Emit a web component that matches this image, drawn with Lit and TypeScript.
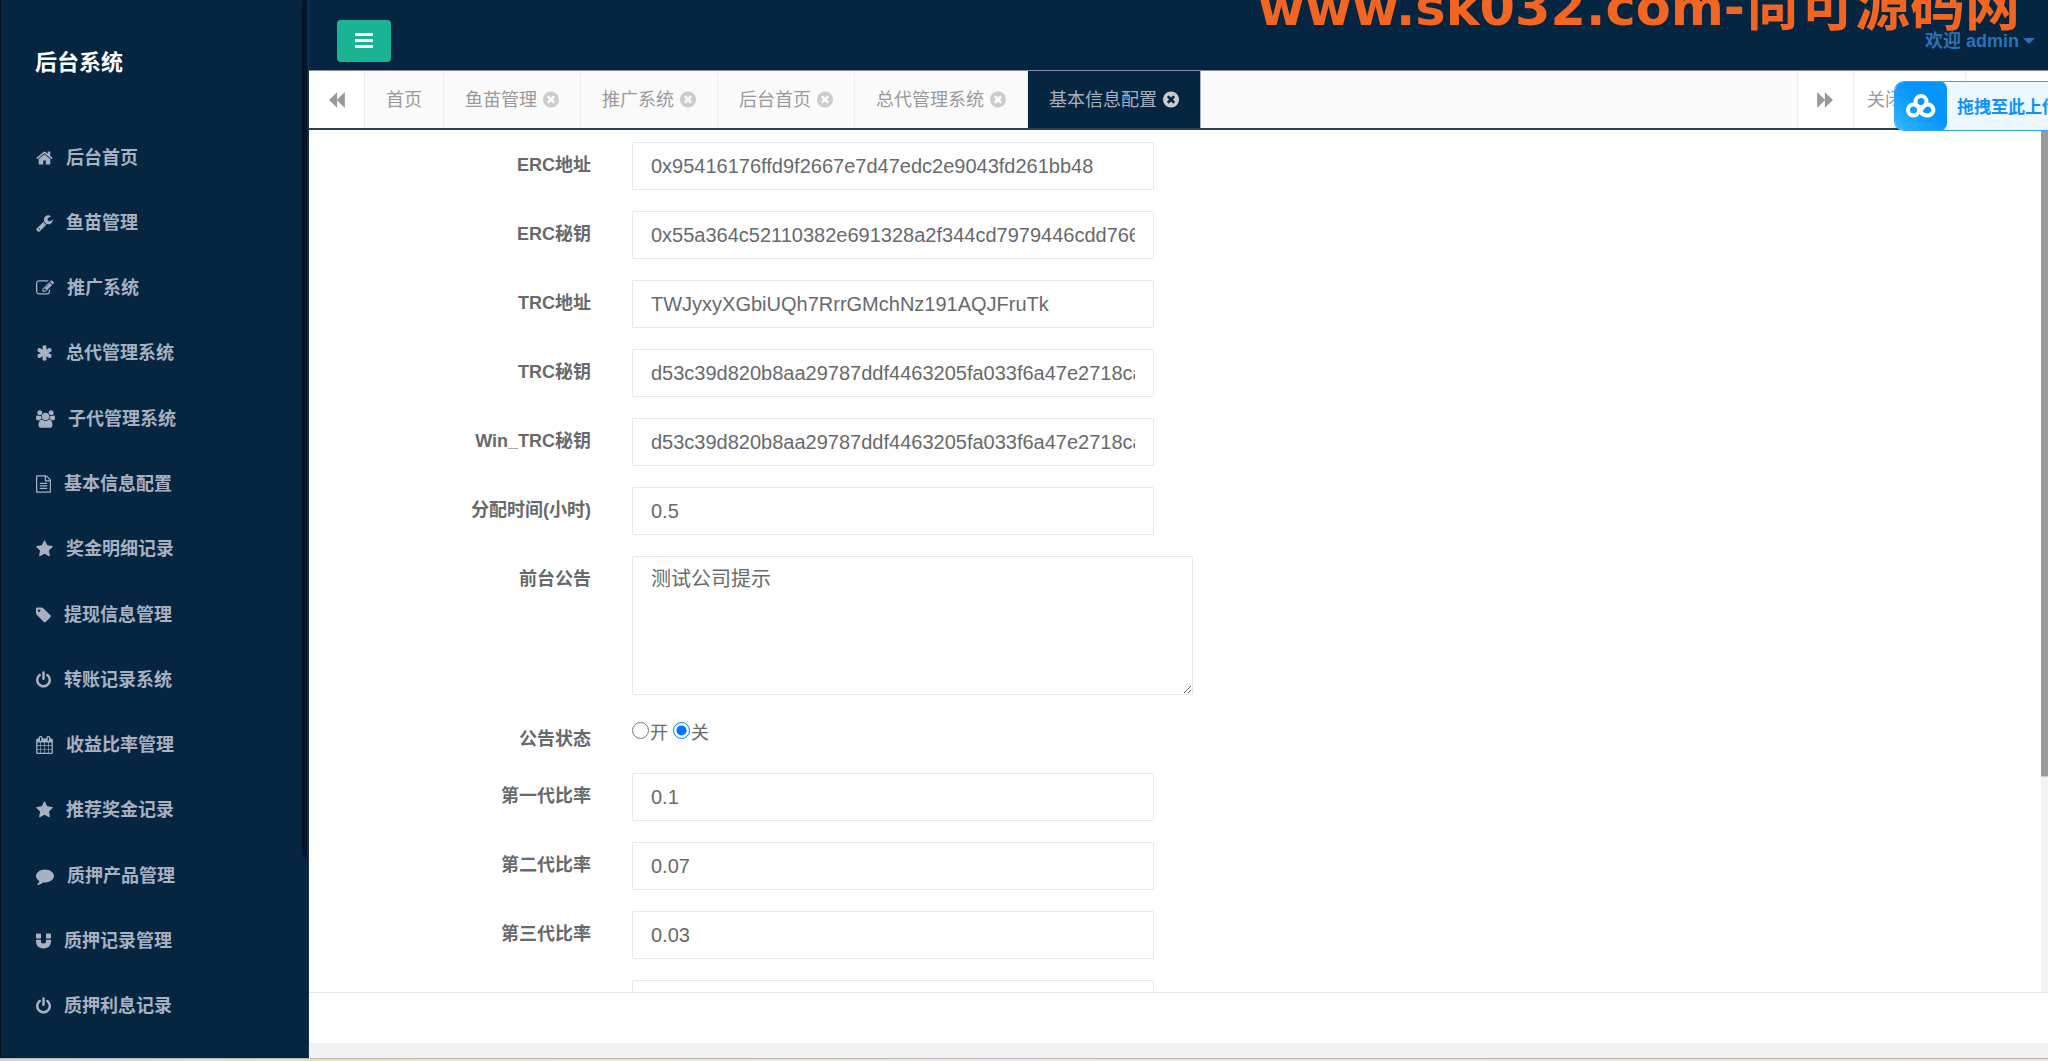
import { LitElement, html, css, svg } from "lit";
import { customElement, property } from "lit/decorators.js";
import { classMap } from "lit/directives/class-map.js";

interface Glyph {
  x: number;
  w: number;
  d: string;
}

// Icon outlines on a 1792-unit em square; x and w give the glyph's own advance box.
const GLYPHS: Record<string, Glyph> = {
  home: { x: 64, w: 1664, d: "M1472 992v480q0 26-19 45t-45 19h-384v-384h-256v384h-384q-26 0-45-19t-19-45v-480q0-1 .5-3t.5-3l575-474 575 474q1 2 1 6zm223-69l-62 74q-8 9-21 11h-3q-13 0-21-7l-692-577-692 577q-12 8-24 7-13-2-21-11l-62-74q-8-10-7-23.5t11-21.5l719-599q32-26 76-26t76 26l244 204v-195q0-14 9-23t23-9h192q14 0 23 9t9 23v408l219 182q10 8 11 21.5t-7 23.5z" },
  wrench: { x: 64, w: 1664, d: "M448 1472q0-26-19-45t-45-19-45 19-19 45 19 45 45 19 45-19 19-45zm644-420l-682 682q-37 37-90 37-52 0-91-37l-106-108q-38-36-38-90 0-53 38-91l681-681q39 98 114.5 173.5t173.5 114.5zm634-435q0 39-23 106-47 134-164.5 217.5t-258.5 83.5q-185 0-316.5-131.5t-131.5-316.5 131.5-316.5 316.5-131.5q58 0 121.5 16.5t107.5 46.5q16 11 16 28t-16 28l-293 169v224l193 107q5-3 79-48.5t135.5-81 70.5-35.5q15 0 23.5 10t8.5 25z" },
  edit: { x: 0, w: 1792, d: "M888 1184l116-116-152-152-116 116v56h96v96h56zm440-720q-16-16-33 1l-350 350q-17 17-1 33t33-1l350-350q17-17 1-33zm80 594v190q0 119-84.5 203.5t-203.5 84.5h-832q-119 0-203.5-84.5t-84.5-203.5v-832q0-119 84.5-203.5t203.5-84.5h832q63 0 117 25 15 7 18 23 3 17-9 29l-49 49q-14 14-32 8-23-6-45-6h-832q-66 0-113 47t-47 113v832q0 66 47 113t113 47h832q66 0 113-47t47-113v-126q0-13 9-22l64-64q15-15 35-7t20 29zm-96-738l288 288-672 672h-288v-288zm444 132l-92 92-288-288 92-92q28-28 68-28t68 28l152 152q28 28 28 68t-28 68z" },
  asterisk: { x: 64, w: 1664, d: "M1546 1050q46 26 59.5 77.5t-12.5 97.5l-64 110q-26 46-77.5 59.5t-97.5-12.5l-266-153v307q0 52-38 90t-90 38h-128q-52 0-90-38t-38-90v-307l-266 153q-46 26-97.5 12.5t-77.5-59.5l-64-110q-26-46-12.5-97.5t59.5-77.5l266-154-266-154q-46-26-59.5-77.5t12.5-97.5l64-110q26-46 77.5-59.5t97.5 12.5l266 153v-307q0-52 38-90t90-38h128q52 0 90 38t38 90v307l266-153q46-26 97.5-12.5t77.5 59.5l64 110q26 46 12.5 97.5t-59.5 77.5l-266 154z" },
  users: { x: -64, w: 1920, d: "M529 896q-162 5-265 128h-134q-82 0-138-40.5t-56-118.5q0-353 124-353 6 0 43.5 21t97.5 42.5 119 21.5q67 0 133-23-5 37-5 66 0 159 81 256zm1071 637q0 120-73 189.5t-194 69.5h-874q-121 0-194-69.5t-73-189.5q0-53 3.5-103.5t14-109 26.5-108.5 43-97.5 62-81 85.5-53.5 111.5-20q10 0 43 21.5t73 48 107 48 135 21.5 135-21.5 107-48 73-48 43-21.5q61 0 111.5 20t85.5 53.5 62 81 43 97.5 26.5 108.5 14 109 3.5 103.5zm-1024-1277q0 106-75 181t-181 75-181-75-75-181 75-181 181-75 181 75 75 181zm704 384q0 159-112.5 271.5t-271.5 112.5-271.5-112.5-112.5-271.5 112.5-271.5 271.5-112.5 271.5 112.5 112.5 271.5zm576 225q0 78-56 118.5t-138 40.5h-134q-103-123-265-128 81-97 81-256 0-29-5-66 66 23 133 23 59 0 119-21.5t97.5-42.5 43.5-21q124 0 124 353zm-128-609q0 106-75 181t-181 75-181-75-75-181 75-181 181-75 181 75 75 181z" },
  file: { x: 128, w: 1536, d: "M1596 380q28 28 48 76t20 88v1152q0 40-28 68t-68 28h-1344q-40 0-68-28t-28-68v-1600q0-40 28-68t68-28h896q40 0 88 20t76 48zm-444-244v376h376q-10-29-22-41l-313-313q-12-12-41-22zm384 1528v-1024h-416q-40 0-68-28t-28-68v-416h-768v1536h1280zm-1024-864q0-14 9-23t23-9h704q14 0 23 9t9 23v64q0 14-9 23t-23 9h-704q-14 0-23-9t-9-23v-64zm736 224q14 0 23 9t9 23v64q0 14-9 23t-23 9h-704q-14 0-23-9t-9-23v-64q0-14 9-23t23-9h704zm0 256q14 0 23 9t9 23v64q0 14-9 23t-23 9h-704q-14 0-23-9t-9-23v-64q0-14 9-23t23-9h704z" },
  star: { x: 64, w: 1664, d: "M1728 647q0 22-26 48l-363 354 86 500q1 7 1 20 0 21-10.5 35.5t-30.5 14.5q-19 0-40-12l-449-236-449 236q-22 12-40 12-21 0-31.5-14.5t-10.5-35.5q0-6 2-20l86-500-364-354q-25-27-25-48 0-37 56-46l502-73 225-455q19-41 49-41t49 41l225 455 502 73q56 9 56 46z" },
  tag: { x: 128, w: 1536, d: "M576 448q0-53-37.5-90.5t-90.5-37.5-90.5 37.5-37.5 90.5 37.5 90.5 90.5 37.5 90.5-37.5 37.5-90.5zm1067 576q0 53-37 90l-491 492q-39 37-91 37-53 0-90-37l-715-716q-38-37-64.5-101t-26.5-117v-416q0-52 38-90t90-38h416q53 0 117 26.5t102 64.5l715 714q37 39 37 91z" },
  power: { x: 128, w: 1536, d: "M1664 896q0 156-61 298t-164 245-245 164-298 61-298-61-245-164-164-245-61-298q0-182 80.5-343t226.5-270q43-32 95.5-25t83.5 50q32 42 24.5 94.5t-49.5 84.5q-98 74-151.5 181t-53.5 228q0 104 40.5 198.5t109.5 163.5 163.5 109.5 198.5 40.5 198.5-40.5 163.5-109.5 109.5-163.5 40.5-198.5q0-121-53.5-228t-151.5-181q-42-32-49.5-84.5t24.5-94.5q31-43 84-50t95 25q146 109 226.5 270t80.5 343zm-640-768v640q0 52-38 90t-90 38-90-38-38-90v-640q0-52 38-90t90-38 90 38 38 90z" },
  calendar: { x: 64, w: 1664, d: "M192 1664h288v-288h-288v288zm352 0h320v-288h-320v288zm-352-352h288v-320h-288v320zm352 0h320v-320h-320v320zm-352-384h288v-288h-288v288zm736 736h320v-288h-320v288zm-384-736h320v-288h-320v288zm768 736h288v-288h-288v288zm-384-352h320v-320h-320v320zm-352-864v-288q0-13-9.5-22.5t-22.5-9.5h-64q-13 0-22.5 9.5t-9.5 22.5v288q0 13 9.5 22.5t22.5 9.5h64q13 0 22.5-9.5t9.5-22.5zm736 864h288v-320h-288v320zm-384-384h320v-288h-320v288zm384 0h288v-288h-288v288zm32-480v-288q0-13-9.5-22.5t-22.5-9.5h-64q-13 0-22.5 9.5t-9.5 22.5v288q0 13 9.5 22.5t22.5 9.5h64q13 0 22.5-9.5t9.5-22.5zm384-64v1280q0 52-38 90t-90 38h-1408q-52 0-90-38t-38-90v-1280q0-52 38-90t90-38h128v-96q0-66 47-113t113-47h64q66 0 113 47t47 113v96h384v-96q0-66 47-113t113-47h64q66 0 113 47t47 113v96h128q52 0 90 38t38 90z" },
  comment: { x: 0, w: 1792, d: "M1792 896q0 174-120 321.5t-326 233-450 85.5q-70 0-145-8-198 175-460 242-49 14-114 22h-5q-15 0-27-10.5t-16-27.5v-1q-3-4-.5-12t2-10 4.5-9.5l6-9 7-8.5 8-9q7-8 31-34.5t34.5-38 31-39.5 32.5-51 27-59 26-76q-157-89-247.5-220t-90.5-281q0-130 71-248.5t191-204.5 286-136.5 348-50.5 348 50.5 286 136.5 191 204.5 71 248.5z" },
  magnet: { x: 128, w: 1536, d: "M1664 832v128q0 201-98.5 362t-274 251.5-395.5 90.5-395.5-90.5-274-251.5-98.5-362v-128q0-26 19-45t45-19h384q26 0 45 19t19 45v128q0 52 23.5 90t53.5 57 71 30 64 13 44 2 44-2 64-13 71-30 53.5-57 23.5-90v-128q0-26 19-45t45-19h384q26 0 45 19t19 45zm-1024-640v384q0 26-19 45t-45 19h-384q-26 0-45-19t-19-45v-384q0-26 19-45t45-19h384q26 0 45 19t19 45zm1024 0v384q0 26-19 45t-45 19h-384q-26 0-45-19t-19-45v-384q0-26 19-45t45-19h384q26 0 45 19t19 45z" },
  backward: { x: 64, w: 1664, d: "M1683 141q19-19 32-13t13 32v1472q0 26-13 32t-32-13l-710-710q-9-9-13-19v710q0 26-13 32t-32-13l-710-710q-19-19-19-45t19-45l710-710q19-19 32-13t13 32v710q4-10 13-19z" },
  forward: { x: 64, w: 1664, d: "M109 1651q-19 19-32 13t-13-32v-1472q0-26 13-32t32 13l710 710q9 9 13 19v-710q0-26 13-32t32 13l710 710q19 19 19 45t-19 45l-710 710q-19 19-32 13t-13-32v-710q-4 10-13 19z" },
  close: { x: 128, w: 1536, d: "M1277 1122q0-26-19-45l-181-181 181-181q19-19 19-45 0-27-19-46l-90-90q-19-19-46-19-26 0-45 19l-181 181-181-181q-19-19-45-19-27 0-46 19l-90 90q-19 19-19 46 0 26 19 45l181 181-181 181q-19 19-19 45 0 27 19 46l90 90q19 19 46 19 26 0 45-19l181-181 181 181q19 19 45 19 27 0 46-19l90-90q19-19 19-46zm387-226q0 209-103 385.5t-279.5 279.5-385.5 103-385.5-103-279.5-279.5-103-385.5 103-385.5 279.5-279.5 385.5-103 385.5 103 279.5 279.5 103 385.5z" },
  bars: { x: 128, w: 1536, d: "M1664 1344v128q0 26-19 45t-45 19h-1408q-26 0-45-19t-19-45v-128q0-26 19-45t45-19h1408q26 0 45 19t19 45zm0-512v128q0 26-19 45t-45 19h-1408q-26 0-45-19t-19-45v-128q0-26 19-45t45-19h1408q26 0 45 19t19 45zm0-512v128q0 26-19 45t-45 19h-1408q-26 0-45-19t-19-45v-128q0-26 19-45t45-19h1408q26 0 45 19t19 45z" },
};

@customElement("fa-icon")
export class FaIcon extends LitElement {
  static styles = css`
    :host { display: inline-flex; flex: none; }
    .glyph { display: block; fill: currentColor; overflow: visible; }
  `;
  @property() name = "home";
  @property({ type: Number }) size = 18;

  render() {
    const g = GLYPHS[this.name];
    return html`<svg class="glyph" aria-hidden="true" width=${Math.round((g.w / 1792) * this.size)} height=${this.size}
      viewBox="${g.x} 0 ${g.w} 1792">${svg`<path d=${g.d}></path>`}</svg>`;
  }
}

const MENU: [string, string][] = [
  ["home", "后台首页"],
  ["wrench", "鱼苗管理"],
  ["edit", "推广系统"],
  ["asterisk", "总代管理系统"],
  ["users", "子代管理系统"],
  ["file", "基本信息配置"],
  ["star", "奖金明细记录"],
  ["tag", "提现信息管理"],
  ["power", "转账记录系统"],
  ["calendar", "收益比率管理"],
  ["star", "推荐奖金记录"],
  ["comment", "质押产品管理"],
  ["magnet", "质押记录管理"],
  ["power", "质押利息记录"],
];

@customElement("side-menu")
export class SideMenu extends LitElement {
  static styles = css`
    :host {
      position: relative;
      display: flex;
      flex-direction: column;
      box-sizing: border-box;
      padding-bottom: 19px;
      background: #052540;
      border-left: 1px solid #0b1620;
      border-right: 1px solid #14325a;
    }
    .title { margin: 0; padding: 47px 34px 46px; font-size: 22px; line-height: 32px; color: #fff; }
    .list { flex: 1; display: flex; flex-direction: column; margin: 0; padding: 0; list-style: none; }
    .item { flex: 1; display: flex; }
    .link {
      flex: 1;
      display: flex;
      align-items: center;
      gap: 13px;
      padding: 0 35px;
      color: #a7b1c2;
      font-size: 18px;
      font-weight: bold;
      line-height: 26px;
      text-decoration: none;
    }
    .thumb { position: absolute; top: 0; right: 1px; width: 5px; height: 81%; border-radius: 3px; background: #041427; }
  `;
  render() {
    return html`
      <h1 class="title">后台系统</h1>
      <ul class="list">
        ${MENU.map(([icon, text]) => html`<li class="item"><a class="link" href="#"><fa-icon name=${icon}></fa-icon>${text}</a></li>`)}
      </ul>
      <div class="thumb"></div>
    `;
  }
}

const TABS = ["首页", "鱼苗管理", "推广系统", "后台首页", "总代管理系统", "基本信息配置"];

@customElement("tab-bar")
export class TabBar extends LitElement {
  static styles = css`
    :host {
      display: flex;
      height: 57px;
      background: #fafafa;
      border-top: 1px solid #7f8fa6;
      border-bottom: 2px solid #2f4050;
      box-shadow: 0 1px 0 #a3abb8;
    }
    .tabs { flex: 1; display: flex; min-width: 0; }
    .tab, .tool {
      display: flex;
      align-items: center;
      padding: 0 21px;
      border: 0;
      border-right: 1px solid #eee;
      background: transparent;
      color: #999;
      font: inherit;
      font-size: 18px;
      line-height: 26px;
      white-space: nowrap;
      text-decoration: none;
    }
    .tab { gap: 6px; }
    .tab fa-icon { color: #ccc; }
    .tab.active { background: #052540; color: #a7b1c2; border-right-color: #a7b1c2; }
    .tool { background: #fff; padding: 0 19px; }
    .tool.end { border-right: 0; border-left: 1px solid #eee; }
    .tool.text { padding: 0 13px; flex: 0 0 112px; box-sizing: border-box; }
    .tail { flex: 0 0 82px; background: #fff; border-left: 1px solid #eee; }
  `;
  render() {
    return html`
      <button class="tool" aria-label="«"><fa-icon name="backward"></fa-icon></button>
      <nav class="tabs">
        ${TABS.map((t, i) => html`<a href="#" class=${classMap({ tab: true, active: i === TABS.length - 1 })}>
          ${t}${i ? html`<fa-icon name="close" size="19"></fa-icon>` : ""}</a>`)}
      </nav>
      <button class="tool end" aria-label="»"><fa-icon name="forward"></fa-icon></button>
      <button class="tool end text">关闭</button>
      <div class="tail"></div>
    `;
  }
}

interface Field {
  id: string;
  label: string;
  value: string;
}

const KEYS: Field[] = [
  { id: "erc-address", label: "ERC地址", value: "0x95416176ffd9f2667e7d47edc2e9043fd261bb48" },
  { id: "erc-secret", label: "ERC秘钥", value: "0x55a364c52110382e691328a2f344cd7979446cdd7663" },
  { id: "trc-address", label: "TRC地址", value: "TWJyxyXGbiUQh7RrrGMchNz191AQJFruTk" },
  { id: "trc-secret", label: "TRC秘钥", value: "d53c39d820b8aa29787ddf4463205fa033f6a47e2718cas" },
  { id: "win-trc-secret", label: "Win_TRC秘钥", value: "d53c39d820b8aa29787ddf4463205fa033f6a47e2718cas" },
  { id: "hours", label: "分配时间(小时)", value: "0.5" },
];

const RATES: Field[] = [
  { id: "rate-1", label: "第一代比率", value: "0.1" },
  { id: "rate-2", label: "第二代比率", value: "0.07" },
  { id: "rate-3", label: "第三代比率", value: "0.03" },
  { id: "rate-4", label: "第四代比率", value: "" },
];

@customElement("config-form")
export class ConfigForm extends LitElement {
  static styles = css`
    :host { display: flex; min-height: 0; overflow: hidden; background: #fff; color: #676a6c; }
    .form { flex: 1; display: flex; flex-direction: column; gap: 21px; padding-top: 12px; min-width: 0; }
    .row { flex: none; display: grid; grid-template-columns: 282px minmax(0, 1fr); column-gap: 41px; align-items: start; }
    .label { padding-top: 11px; text-align: right; font-size: 18px; font-weight: bold; line-height: 25px; }
    .input, .area {
      display: block;
      box-sizing: border-box;
      width: 100%;
      max-width: 522px;
      height: 48px;
      padding: 8px 18px;
      border: 1px solid #e7e8ea;
      border-radius: 1px;
      background: #fff;
      color: #676a6c;
      font: inherit;
      font-size: 20px;
      line-height: 28px;
      outline: 0;
    }
    .area { max-width: 561px; height: 139px; resize: both; }
    .radios { display: flex; align-items: center; height: 34px; font-size: 18px; line-height: 26px; }
    .radio { width: 17px; height: 17px; margin: 0 1px 5px 0; }
    .option { margin-right: 5px; }
    .track { flex: 0 0 7px; background: #f3f3f3; }
    .bar { height: 75%; background: #999997; box-sizing: border-box; border-bottom: 1px solid #ccc; }
  `;

  private field(f: Field) {
    return html`<div class="row">
      <label class="label" for=${f.id}>${f.label}</label>
      <input class="input" id=${f.id} type="text" .value=${f.value} />
    </div>`;
  }

  render() {
    return html`
      <form class="form">
        ${KEYS.map((f) => this.field(f))}
        <div class="row">
          <label class="label" for="notice">前台公告</label>
          <textarea class="area" id="notice" .value=${"测试公司提示"}></textarea>
        </div>
        <div class="row">
          <span class="label" id="state">公告状态</span>
          <div class="radios" role="radiogroup" aria-labelledby="state">
            <input class="radio" type="radio" name="state" id="on" /><label class="option" for="on">开</label>
            <input class="radio" type="radio" name="state" id="off" checked /><label class="option" for="off">关</label>
          </div>
        </div>
        ${RATES.map((f) => this.field(f))}
      </form>
      <div class="track"><div class="bar"></div></div>
    `;
  }
}

@customElement("app-root")
export class AppRoot extends LitElement {
  static styles = css`
    :host {
      position: relative;
      display: flex;
      flex-direction: column;
      height: 100vh;
      overflow: hidden;
      background: #fff;
      font-family: "Liberation Sans", "Noto Sans CJK SC", sans-serif;
    }
    .page { flex: 1; display: flex; min-height: 0; }
    .menu { flex: 0 0 309px; }
    .main { flex: 1; display: flex; flex-direction: column; min-width: 0; }
    .header {
      flex: 0 0 70px;
      box-sizing: border-box;
      display: flex;
      justify-content: space-between;
      align-items: center;
      padding: 0 13px 0 28px;
      background: #052540;
    }
    .toggle {
      display: flex;
      align-items: center;
      justify-content: center;
      width: 54px;
      height: 42px;
      margin-top: 12px;
      padding: 0 0 2px;
      border: 0;
      border-radius: 4px;
      background: #1ab394;
      color: #fff;
    }
    .user {
      display: flex;
      align-items: center;
      gap: 4px;
      margin-top: 12px;
      color: #2d72b5;
      font-size: 18px;
      font-weight: bold;
      line-height: 26px;
      text-decoration: none;
    }
    .caret { border: 6px solid transparent; border-top-color: currentColor; border-bottom: 0; }
    .config { flex: 1; }
    .tabbar { flex: none; }
    .footer { flex: 0 0 50px; border-top: 1px solid #e7e7e7; }
    .gutter { flex: 0 0 15px; background: #f2f2f2; }
    .edge { flex: 0 0 2px; border-top: 1px solid #b9b9b7; background: linear-gradient(90deg, #d5d0d8, #e3e6b4 15%, #ece6dc 45%, #f0e0d2); }
    .banner {
      position: absolute;
      top: -26px;
      right: 28px;
      display: flex;
      align-items: baseline;
      color: #f26522;
      font-family: "DejaVu Sans", "Noto Sans CJK SC", sans-serif;
      font-size: 51px;
      font-weight: bold;
      line-height: 64px;
      white-space: nowrap;
    }
    .site { font-size: 55px; }
    .upload {
      position: absolute;
      top: 81px;
      right: 0;
      display: flex;
      align-items: center;
      box-sizing: border-box;
      width: 154px;
      height: 50px;
      overflow: hidden;
      border: 1px solid #2ba2ff;
      border-right: 0;
      border-radius: 10px 0 0 10px;
      background: #edf7ff;
      color: #0a93ff;
      font-size: 17px;
      font-weight: bold;
      line-height: 24px;
      white-space: nowrap;
    }
    .cloud {
      flex: 0 0 52px;
      display: flex;
      align-items: center;
      justify-content: center;
      height: 50px;
      margin-right: 10px;
      border-radius: 8px;
      background: linear-gradient(45deg, #35b8ff, #0595ff 55%);
    }
    .cloud svg { fill: none; stroke: #fff; stroke-width: 4; }
    .hint { padding-top: 3px; }
  `;

  render() {
    return html`
      <div class="page">
        <side-menu class="menu"></side-menu>
        <main class="main">
          <header class="header">
            <button class="toggle" aria-label="菜单"><fa-icon name="bars" size="21"></fa-icon></button>
            <a class="user" href="#">欢迎 admin<span class="caret"></span></a>
          </header>
          <tab-bar class="tabbar"></tab-bar>
          <config-form class="config"></config-form>
          <footer class="footer"></footer>
          <div class="gutter"></div>
        </main>
      </div>
      <div class="edge"></div>
      <div class="banner">www.sk032.com-<span class="site">尚可源码网</span></div>
      <div class="upload">
        <span class="cloud">
          <svg width="30" height="24" viewBox="0 0 30 24" aria-hidden="true">
            <circle cx="15" cy="7.5" r="5.5" />
            <circle cx="7.5" cy="16" r="5.5" />
            <path d="M15 18.5C16.8 20.8 19 21.5 21.8 21.5A5.5 5.5 0 1 0 17.2 13L13 19.2" />
          </svg>
        </span>
        <span class="hint">拖拽至此上传</span>
      </div>
    `;
  }
}
